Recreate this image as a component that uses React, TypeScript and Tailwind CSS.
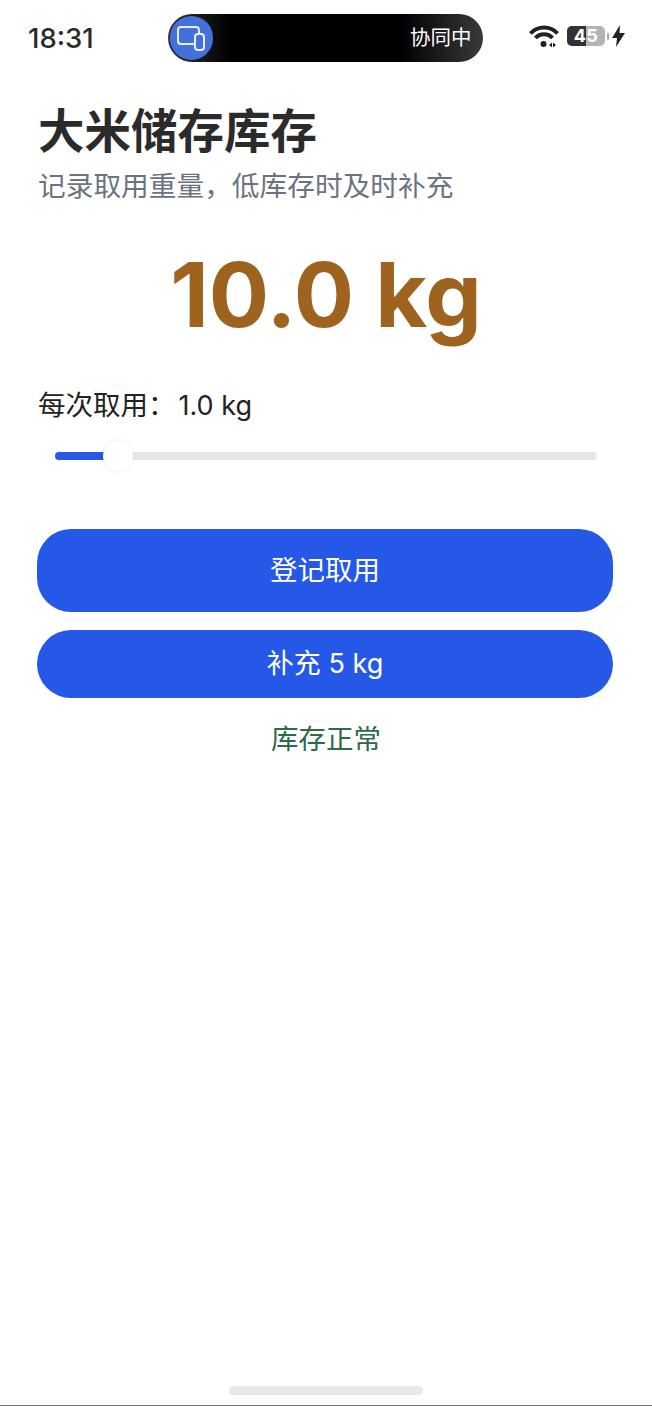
const cjk = "font-['Inter','Noto_Sans_CJK_SC',sans-serif]";

function StatusBar() {
  return (
    <div className="flex h-[76px] items-start justify-between pl-[28px] pr-[27px] pt-[14px]">
      <div className="mt-[7px] w-[66px] whitespace-nowrap text-[27.500px] font-medium leading-[34px] text-[#2a2a2a]">18:31</div>
      <div className="ml-[27px] flex h-[48px] w-[315px] items-center justify-between rounded-full bg-[linear-gradient(90deg,#333_0%,#000_20%,#000_74%,#3a3a3a_100%)] pl-[2px] pr-[11px]">
        <div className="flex h-[44px] w-[43px] items-center justify-center rounded-full bg-[#4470dc]">
          <svg width="30" height="26" viewBox="0 0 30 26" fill="none" stroke="#e8eeff" strokeWidth="2">
            <path d="M19 19H5a3 3 0 0 1-3-3V5a3 3 0 0 1 3-3h15a3 3 0 0 1 3 3v3" />
            <rect x="19" y="9" width="9" height="16" rx="3" />
          </svg>
        </div>
        <div className="text-[20.500px] leading-[26px] text-white">协同中</div>
      </div>
      <div className="mt-[10px] flex items-center">
        <svg width="30" height="24" viewBox="0 0 30 24" className="mr-[8px]">
          <path d="M1.500 9.500C8.500 1.500 21.500 1.500 28.500 9.500" fill="none" stroke="#222" strokeWidth="4" />
          <path d="M6.500 14C11 9 19 9 23.500 14" fill="none" stroke="#222" strokeWidth="4" />
          <circle cx="14.500" cy="20" r="3" fill="#222" />
          <path d="M20 21l3-2.500v5zM24 18.500l3 2.500-3 2.500z" fill="#222" />
        </svg>
        <div className="relative flex h-[20px] w-[38px] items-center justify-center overflow-hidden rounded-[5px] bg-[#b4b4b4]">
          <div className="absolute inset-y-0 left-0 w-[19px] bg-[#333]" />
          <span className="relative text-[18px] font-bold leading-[20px] tracking-[0.500px] text-white">45</span>
        </div>
        <div className="ml-[2px] h-[7px] w-[2px] rounded-full bg-[#aaa]" />
        <svg width="13" height="22" viewBox="0 0 13 22" className="ml-[3px]">
          <path d="M8 0L0 13h5l-1 9 9-14H7.500z" fill="#222" />
        </svg>
      </div>
    </div>
  );
}

export default function App() {
  return (
    <div className={`relative flex h-[1406px] w-[652px] flex-col overflow-hidden border-b border-[#777] bg-white ${cjk}`}>
      <StatusBar />
      <div className="flex flex-1 flex-col px-[38px] pt-[28px]">
        <h1 className="text-[46.500px] font-bold leading-[54px] text-[#2b2b2b]">大米储存库存</h1>
        <p className="mt-[10px] text-[27.700px] leading-[36px] text-[#6b7280]">记录取用重量，低库存时及时补充</p>
        <div className="mt-[37px] text-center text-[89.500px] font-bold leading-[108px] text-[#9e631f]">10.0 kg</div>
        <div className="mt-[38px] text-[27.500px] leading-[36px] text-[#222]">每次取用：<span className="ml-[3px] text-[27px]">1.0 kg</span></div>
        <div className="relative mt-[14px] h-[36px] px-[17px]">
          <div className="absolute left-[17px] right-[17px] top-[14px] h-[8px] rounded-full bg-[#e6e6e6]" />
          <div className="absolute left-[17px] top-[14px] h-[8px] w-[50px] rounded-l-full bg-[#2658e8]" />
          <div className="absolute left-[65px] top-[3px] h-[30px] w-[30px] rounded-full bg-white shadow-[0_0_4px_rgba(0,0,0,0.08)]" />
        </div>
        <button className="ml-[-1px] mt-[55px] flex h-[83px] w-[576px] items-center justify-center rounded-[34px] bg-[#2658e8] pt-[1px] text-[27.500px] text-white">登记取用</button>
        <button className="ml-[-1px] mt-[18px] flex h-[68px] w-[576px] items-center justify-center rounded-full bg-[#2658e8] pt-[1px] text-[27px] text-white">补充 5 kg</button>
        <div className="mt-[23px] text-center text-[27.500px] leading-[36px] text-[#2d6a4a]">库存正常</div>
      </div>
      <div className="mx-auto mb-[10px] h-[9px] w-[194px] rounded-full bg-[#e8e8e8]" />
    </div>
  );
}
